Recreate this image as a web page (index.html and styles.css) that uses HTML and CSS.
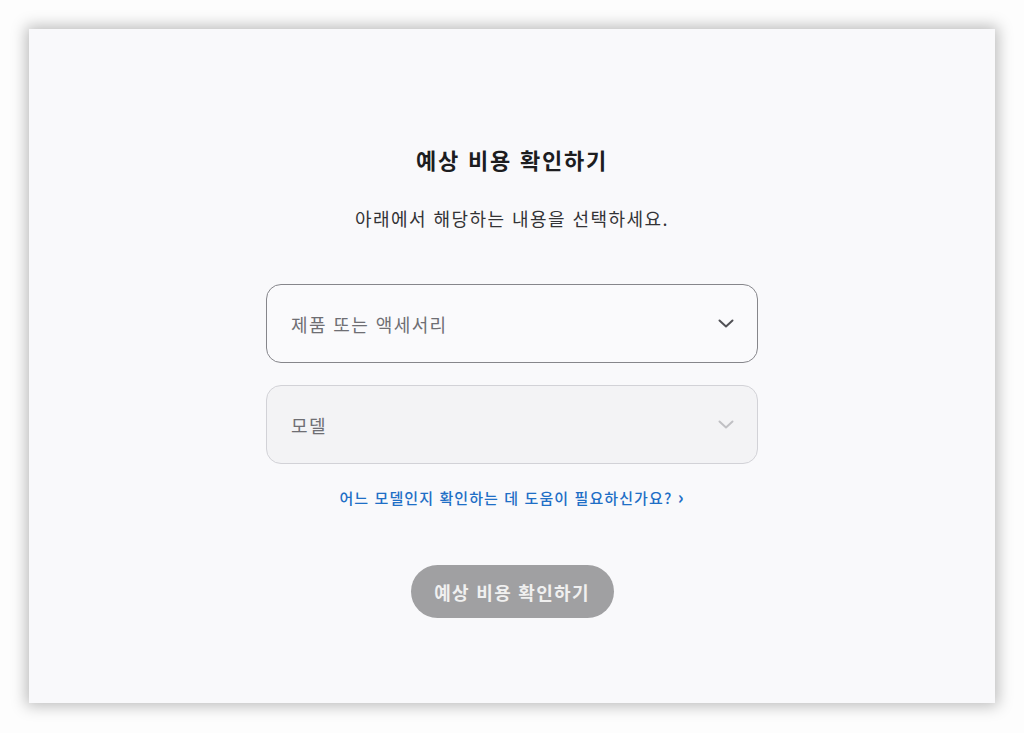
FILE: index.html
```html
<!DOCTYPE html>
<html lang="ko">
<head>
    <meta charset="UTF-8">
    <title>예상 비용 확인하기</title>
    <link rel="stylesheet" href="styles.css">
</head>
<body>
    <div class="panel">
        <h1 class="title">예상 비용 확인하기</h1>
        <p class="subtitle">아래에서 해당하는 내용을 선택하세요.</p>

        <div class="select">
            <span class="select-label">제품 또는 액세서리</span>
            <svg class="chevron" width="16" height="10" viewBox="0 0 16 10"><path d="M1.5 1.5 L8 7.5 L14.5 1.5" fill="none" stroke="currentColor" stroke-width="2" stroke-linecap="round" stroke-linejoin="round"/></svg>
        </div>
        <div class="select disabled">
            <span class="select-label">모델</span>
            <svg class="chevron" width="16" height="10" viewBox="0 0 16 10"><path d="M1.5 1.5 L8 7.5 L14.5 1.5" fill="none" stroke="currentColor" stroke-width="2" stroke-linecap="round" stroke-linejoin="round"/></svg>
        </div>

        <a href="#" class="help-link">어느 모델인지 확인하는 데 도움이 필요하신가요? <span class="arrow">›</span></a>

        <button class="estimate-btn" type="button" disabled>예상 비용 확인하기</button>
    </div>
</body>
</html>
```

FILE: styles.css
```css
body {
    margin: 0;
    padding: 29px;
    background-color: #fdfdfd;
    font-family: "Noto Sans CJK KR", "Noto Sans", sans-serif;
}
.panel {
    width: 966px;
    height: 674px;
    box-sizing: border-box;
    background-color: #f9f9fb;
    box-shadow: 0 0 14px 3px rgba(0, 0, 0, 0.26);
    display: flex;
    flex-direction: column;
    align-items: center;
    padding-top: 114px;
}
.title {
    margin: 0;
    font-size: 22px;
    font-weight: 700;
    letter-spacing: 1.8px;
    color: #1d1d1f;
    line-height: 32px;
}
.subtitle {
    margin: 31px 0 0;
    font-size: 18px;
    letter-spacing: 1.45px;
    color: #333336;
    line-height: 24px;
}
.select {
    width: 492px;
    height: 79px;
    box-sizing: border-box;
    margin-top: 54px;
    border: 1px solid #86868b;
    border-radius: 15px;
    background-color: #fafafc;
    display: flex;
    align-items: center;
    justify-content: space-between;
    padding: 0 23px 0 24px;
}
.select + .select {
    margin-top: 22px;
}
.select-label {
    font-size: 18px;
    letter-spacing: 1.4px;
    color: #6e6e73;
}
.chevron {
    color: #505055;
}
.select.disabled {
    border-color: #d2d2d7;
    background-color: #f3f3f5;
}
.select.disabled .chevron {
    color: #c0c0c4;
}
.help-link {
    margin-top: 22px;
    font-size: 15px;
    font-weight: 500;
    letter-spacing: 1.1px;
    color: #1f6fc6;
    text-decoration: none;
    line-height: 24px;
}
.arrow {
    font-size: 18px;
    font-weight: 700;
    line-height: 0;
}
.estimate-btn {
    margin-top: 55px;
    width: 203px;
    height: 53px;
    border: none;
    border-radius: 27px;
    background-color: #a0a0a2;
    color: #f0f0f0;
    font-family: inherit;
    font-size: 18px;
    font-weight: 700;
    letter-spacing: 1.3px;
}
```
